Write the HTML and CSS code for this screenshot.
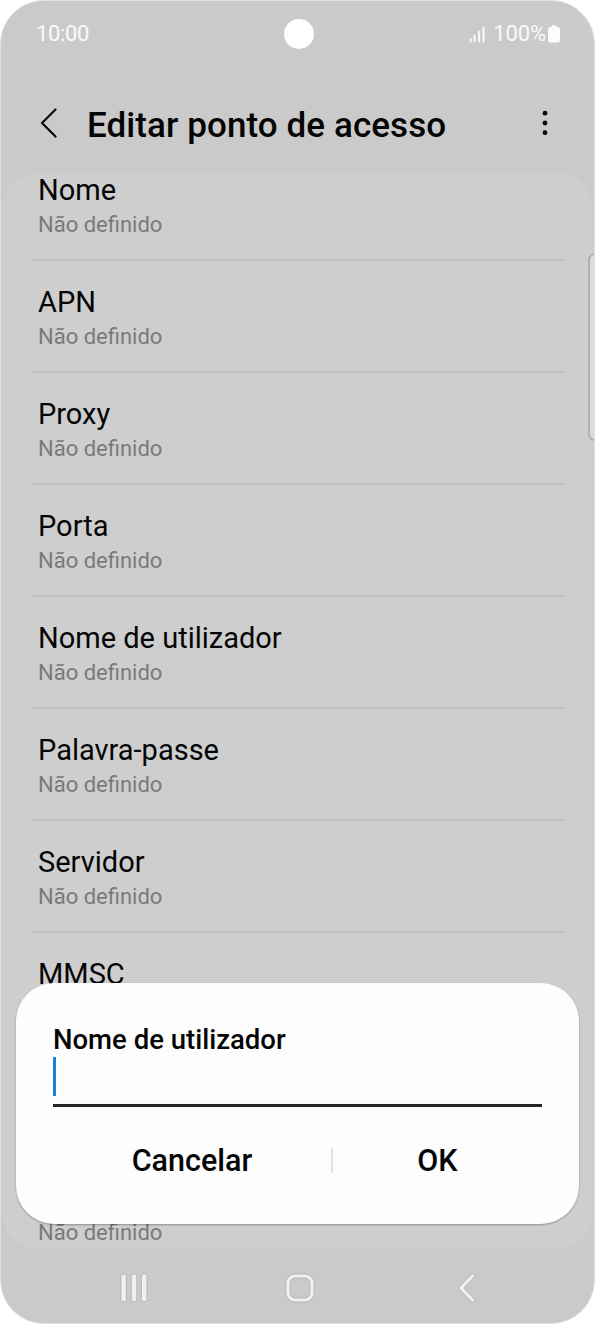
FILE: index.html
```html
<!DOCTYPE html>
<html lang="pt">
<head>
<meta charset="utf-8">
<title>Editar ponto de acesso</title>
<link rel="stylesheet" href="styles.css">
</head>
<body>
<div class="phone">
  <div class="status">
    <span class="clock">10:00</span>
    <span class="camera"></span>
    <div class="indicators">
      <svg class="signal" width="17" height="17" viewBox="0 0 17 17"><path d="M1.6 13.3V15.4M5.6 9.8V15.4M10.1 5.5V15.4M14.5 1.6V15.4" stroke="#fafafa" stroke-width="2" stroke-linecap="round" fill="none"/></svg>
      <span class="percent">100%</span>
      <svg class="battery" width="12" height="18" viewBox="0 0 12 18"><path d="M3.5 0.3h5V2H10q2 0 2 2v11.6q0 2-2 2H2q-2 0-2-2V4q0-2 2-2h1.500z" fill="#fcfcfc"/></svg>
    </div>
  </div>
  <header class="header">
    <svg class="back" width="18" height="30" viewBox="0 0 18 30"><path d="M16.500 1.500L3 15L16.500 28.500" stroke="#080808" stroke-width="2.200" stroke-linecap="round" stroke-linejoin="round" fill="none"/></svg>
    <h1 class="title">Editar ponto de acesso</h1>
    <svg class="more" width="6" height="26" viewBox="0 0 6 26"><circle cx="3" cy="3.200" r="2.400"/><circle cx="3" cy="13" r="2.400"/><circle cx="3" cy="22.700" r="2.400"/></svg>
  </header>
  <main class="card">
    <div class="list">
      <div class="row"><div class="name">Nome</div><div class="value">Não definido</div></div>
      <div class="row"><div class="name">APN</div><div class="value">Não definido</div></div>
      <div class="row"><div class="name">Proxy</div><div class="value">Não definido</div></div>
      <div class="row"><div class="name">Porta</div><div class="value">Não definido</div></div>
      <div class="row"><div class="name">Nome de utilizador</div><div class="value">Não definido</div></div>
      <div class="row"><div class="name">Palavra-passe</div><div class="value">Não definido</div></div>
      <div class="row"><div class="name">Servidor</div><div class="value">Não definido</div></div>
      <div class="row"><div class="name">MMSC</div></div>
      <div class="row"></div>
      <div class="row"><div class="name"></div><div class="value">Não definido</div></div>
    </div>
  </main>
  <nav class="nav">
    <svg width="28" height="30" viewBox="0 0 28 30"><g fill="#f0f0f0" stroke="#b5b5b5" stroke-width="1"><rect x="0.800" y="1" width="5.600" height="27.500" rx="2"/><rect x="11.200" y="1" width="5.600" height="27.500" rx="2"/><rect x="21.400" y="1" width="5.600" height="27.500" rx="2"/></g></svg>
    <svg class="home" width="30" height="30" viewBox="0 0 30 30"><rect x="3" y="3" width="24" height="24" rx="7" fill="none" stroke="#b5b5b5" stroke-width="5"/><rect x="3" y="3" width="24" height="24" rx="7" fill="none" stroke="#f0f0f0" stroke-width="3.200"/></svg>
    <svg width="18" height="30" viewBox="0 0 18 30"><g fill="none" stroke-linecap="round" stroke-linejoin="round"><path d="M14.500 3L3 15L14.500 27" stroke="#b8b8b8" stroke-width="4.800"/><path d="M14.500 3L3 15L14.500 27" stroke="#f2f2f2" stroke-width="3.200"/></g></svg>
  </nav>
  <div class="edge-panel"></div>
  <section class="dialog">
    <h2 class="dialog-title">Nome de utilizador</h2>
    <div class="field"><span class="caret"></span></div>
    <div class="actions">
      <span class="action cancel">Cancelar</span>
      <span class="divider"></span>
      <span class="action ok">OK</span>
    </div>
  </section>
</div>
</body>
</html>
```
FILE: styles.css
```css
* { box-sizing: border-box; }
body { margin: 0; background: #fff; font-family: Roboto, sans-serif; color: #050505; }
h1, h2 { margin: 0; }
svg { display: block; flex: none; }
.phone {
  position: relative;
  width: 595px;
  height: 1324px;
  overflow: hidden;
  background: #cacaca;
  border: 1px solid #e0e0e0;
  border-radius: 44px;
  display: flex;
  flex-direction: column;
}
.status {
  flex: none;
  height: 66px;
  padding: 0 34px 0 35px;
  display: grid;
  grid-template-columns: 1fr 30px 1fr;
  align-items: center;
  color: #fafafa;
  font-size: 22px;
  line-height: 26px;
}
.clock { letter-spacing: -0.35px; }
.percent { letter-spacing: -0.1px; }
.camera { width: 30px; height: 30px; margin-left: 1px; border-radius: 50%; background: #fff; }
.indicators { display: flex; justify-content: flex-end; align-items: center; }
.signal { margin-right: 7px; }
.battery { margin-left: 2px; }
.header { flex: none; height: 106px; display: flex; align-items: center; padding: 11px 46px 0 38px; }
.back { margin-top: -5px; }
.title { flex: 1; margin-left: 30px; font-size: 35px; font-weight: 500; line-height: 42px; letter-spacing: 0.08px; white-space: nowrap; }
.more { margin-top: -5px; fill: #050505; }
.card { flex: none; height: 1076px; overflow: hidden; border-radius: 38px; background: #cecece; padding: 0 30px; }
.list { margin-top: -24px; }
.row { height: 112px; padding: 24px 7px 0; border-bottom: 2px solid #bfbfbf; }
.name { height: 34px; font-size: 29px; line-height: 34px; white-space: nowrap; }
.value { font-size: 22px; line-height: 35px; color: #7a7a7a; }
.nav { flex: none; height: 74px; display: flex; justify-content: space-between; align-items: center; padding: 4px 118px 0 119px; }
.home { margin-right: 6px; }
.edge-panel {
  position: absolute;
  right: -9px;
  top: 252px;
  width: 15px;
  height: 188px;
  background: #dcdcdc;
  border: 2px solid #b0b0b0;
  border-radius: 7px;
}
.dialog {
  position: absolute;
  left: 15px;
  top: 982px;
  width: 563px;
  height: 241px;
  padding: 39px 37px 0;
  border-radius: 38px;
  background: #fdfdfd;
  box-shadow: 0 1px 2px rgba(0, 0, 0, 0.3);
}
.dialog-title { font-size: 27.500px; font-weight: 500; line-height: 36px; margin-bottom: -1px; }
.field { height: 50px; border-bottom: 3px solid #262424; }
.caret { display: block; width: 3px; height: 39px; background: #1c82d8; }
.actions { display: flex; align-items: center; height: 106px; font-size: 30.500px; font-weight: 500; }
.action { text-align: center; padding-top: 1px; }
.cancel { width: 278px; }
.ok { flex: 1; }
.divider { width: 2px; height: 25px; background: #e2e2e2; }
```
